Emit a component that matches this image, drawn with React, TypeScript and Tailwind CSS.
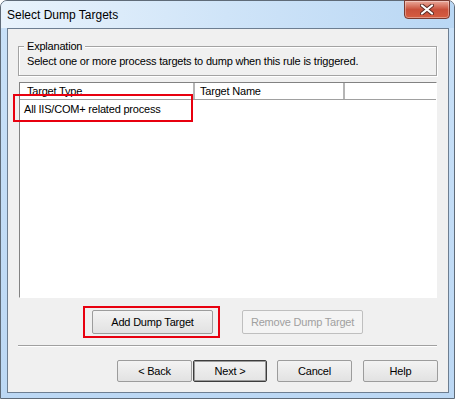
import React from "react";

const ui = { fontFamily: '"Liberation Sans", Arial, sans-serif' };

const Btn: React.FC<{ label: string; w: string; h: string; disabled?: boolean; isDefault?: boolean; children?: React.ReactNode }> = ({ label, w, h, disabled, isDefault, children }) => (
  <div className={`relative ${w} ${h}`}>
    <div
      className={`flex h-full w-full items-center justify-center rounded-[2px] border text-[11px] tracking-[-0.2px] ${
        disabled
          ? "border-[#bfbfbf] bg-[#f4f4f4] text-[#a0a0a0]"
          : isDefault
          ? "border-[#3d3d3d] bg-gradient-to-b from-[#f2f2f2] to-[#e4e4e4] text-black shadow-[inset_0_0_0_1px_#9a9a9a]"
          : "border-[#9c9c9c] bg-gradient-to-b from-[#f3f3f3] to-[#e2e2e2] text-black"
      }`}
    >
      {label}
    </div>
    {children}
  </div>
);

export default function App() {
  return (
    <div className="w-[455px] h-[399px] bg-white" style={ui}>
      <div className="flex h-full w-full flex-col rounded-t-[7px] border border-[#5f6b78] bg-gradient-to-b from-[#c9e1f8] to-[#bcd8f4]">
        {/* title bar */}
        <div className="relative flex h-[27px] shrink-0 items-center rounded-t-[6px] bg-gradient-to-r from-[#e9f3fc] via-[#cfe4f8] to-[#b9d7f4] pl-[6px]">
          <span className="pt-[1px] text-[12px] text-black">Select Dump Targets</span>
          <div className="absolute right-[4px] top-[-1px] flex h-[19px] w-[46px] items-center justify-center rounded-b-[4px] border border-[#7a3a30] bg-gradient-to-b from-[#e9a99b] via-[#c9503b] to-[#d65d41] shadow-[inset_0_0_0_1px_rgba(255,255,255,0.35)]">
            <svg width="14" height="11" viewBox="0 0 14 11">
              <path d="M2 1.5 L12 9.5 M12 1.5 L2 9.5" stroke="#5a2a24" strokeWidth="4" strokeLinecap="round" />
              <path d="M2 1.5 L12 9.5 M12 1.5 L2 9.5" stroke="#ffffff" strokeWidth="2.2" strokeLinecap="round" />
            </svg>
          </div>
        </div>

        {/* frame body */}
        <div className="flex flex-1 px-[6px] pb-[5px]">
          <div className="flex flex-1 flex-col border border-[#6d7e91] bg-[#f0f0f0] px-[10px] text-[11px] tracking-[-0.2px] text-black">
            {/* Explanation group */}
            <div className="relative mt-[17px] h-[30px] w-[419px] border border-[#a3a3a3] shadow-[inset_1px_1px_0_#ffffff,1px_1px_0_#ffffff]">
              <span className="absolute left-[5px] top-[-8px] bg-[#f0f0f0] px-[3px] leading-[14px]">Explanation</span>
              <div className="pl-[8px] pt-[7px] leading-[14px]">
                Select one or more process targets to dump when this rule is triggered.
              </div>
            </div>

            {/* list view */}
            <div className="relative ml-[1px] mt-[6px] flex h-[216px] w-[418px] flex-col border border-[#828282] border-b-white border-r-white bg-white">
              <div className="flex h-[17px] border-b border-[#a0a0a0] bg-white">
                <div className="w-[175px] border-r-2 border-[#b5b5b5] pl-[7px] leading-[16px]">Target Type</div>
                <div className="w-[150px] border-r-2 border-[#b5b5b5] pl-[5px] leading-[16px]">Target Name</div>
                <div className="flex-1" />
              </div>
              <div className="h-[17px] pl-[4px] pt-[1px] leading-[16px]">All IIS/COM+ related process</div>
              <div className="absolute left-[-7px] top-[11px] h-[28px] w-[180px] border-2 border-[#e8000f]" />
            </div>

            {/* add/remove */}
            <div className="mt-[12px] flex pl-[74px]">
              <Btn label="Add Dump Target" w="w-[121px]" h="h-[24px]">
                <div className="absolute left-[-9px] top-[-4px] h-[32px] w-[137px] border-2 border-[#e8000f]" />
              </Btn>
              <div className="w-[29px]" />
              <Btn label="Remove Dump Target" w="w-[121px]" h="h-[24px]" disabled />
            </div>

            {/* separator */}
            <div className="mt-[11px] h-[2px] w-[419px] border-t border-[#a0a0a0] border-b border-b-white" />

            {/* bottom buttons */}
            <div className="mt-[13px] flex pl-[99px]">
              <Btn label="< Back" w="w-[75px]" h="h-[22px]" />
              <div className="w-[1px]" />
              <Btn label="Next >" w="w-[74px]" h="h-[22px]" isDefault />
              <div className="w-[10px]" />
              <Btn label="Cancel" w="w-[75px]" h="h-[22px]" />
              <div className="w-[11px]" />
              <Btn label="Help" w="w-[75px]" h="h-[22px]" />
            </div>
          </div>
        </div>
      </div>
    </div>
  );
}
